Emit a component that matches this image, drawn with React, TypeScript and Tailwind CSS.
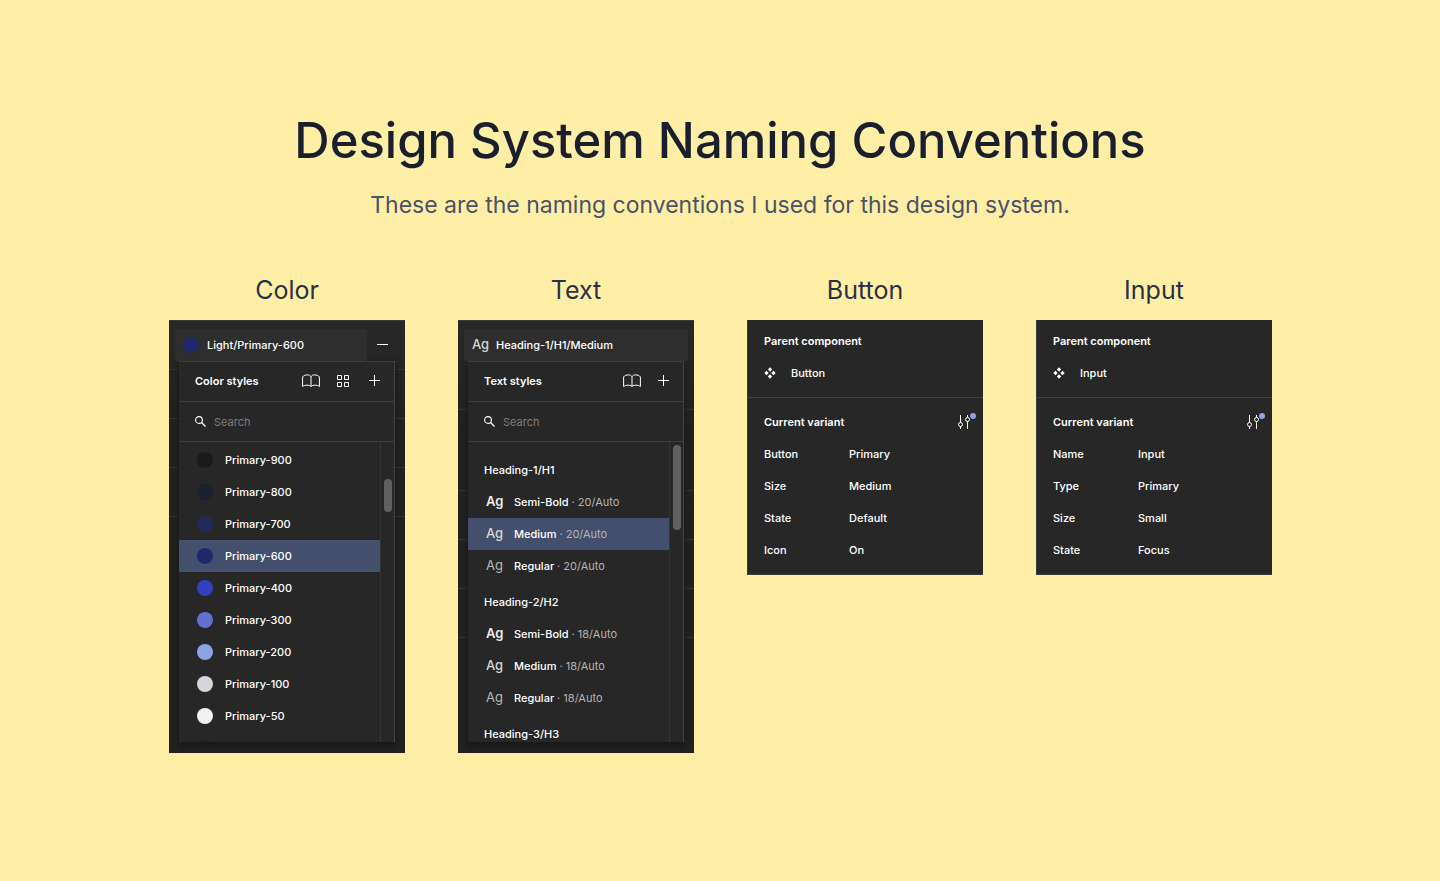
import type { ReactNode } from "react";

type Swatch = { name: string; color: string };
type TextGroup = { title: string; size?: string; styles: { name: string; weight: string }[] };

const swatches: Swatch[] = [
  { name: "Primary-900", color: "bg-[#1a1a1b]" },
  { name: "Primary-800", color: "bg-[#1a202e]" },
  { name: "Primary-700", color: "bg-[#212a58]" },
  { name: "Primary-600", color: "bg-[#20276b]" },
  { name: "Primary-400", color: "bg-[#3340bf]" },
  { name: "Primary-300", color: "bg-[#6470ce]" },
  { name: "Primary-200", color: "bg-[#8fa2e3]" },
  { name: "Primary-100", color: "bg-[#d5d6db]" },
  { name: "Primary-50", color: "bg-[#f1f2f4]" },
];

const weights = [
  { name: "Semi-Bold", weight: "font-semibold text-[#ececec]" },
  { name: "Medium", weight: "font-medium text-[#d6d6d6]" },
  { name: "Regular", weight: "font-normal text-[#b8b8b8]" },
];

const textGroups: TextGroup[] = [
  { title: "Heading-1/H1", size: "20/Auto", styles: weights },
  { title: "Heading-2/H2", size: "18/Auto", styles: weights },
  { title: "Heading-3/H3", styles: [] },
];

const BookIcon = () => (
  <svg width="18" height="14" viewBox="0 0 18 14" fill="none" stroke="currentColor">
    <path d="M9 2.700C8.300 1.400 7 .9 5.300.9S1.600 1.400.6 2.900v9.600C1.800 11.500 3.500 11.200 5 11.200s3 .3 4 1.300c1-1 2.500-1.300 4-1.300s3.200.3 4.400 1.300V2.900C16.400 1.400 14.400.9 12.700.9S9.700 1.400 9 2.700zM9 2.700v9.800" />
  </svg>
);

const GridIcon = () => (
  <svg width="12" height="12" viewBox="0 0 12 12" fill="none" stroke="currentColor">
    <path d="M.5.5h4v4h-4zM7.500.5h4v4h-4zM.5 7.500h4v4h-4zM7.500 7.500h4v4h-4z" />
  </svg>
);

const PlusIcon = () => (
  <svg width="12" height="12" viewBox="0 0 12 12" stroke="currentColor">
    <path d="M5.500 0v11M0 5.500h11" />
  </svg>
);

const MinusIcon = () => (
  <svg width="12" height="12" viewBox="0 0 12 12" stroke="currentColor">
    <path d="M0 5.500h11" />
  </svg>
);

const SearchIcon = () => (
  <svg width="11" height="11" viewBox="0 0 11 11" fill="none" stroke="currentColor">
    <circle cx="4" cy="4" r="3.400" strokeWidth="1.100" />
    <path d="M6.500 6.500l4 4" strokeWidth="1.300" />
  </svg>
);

const ComponentIcon = () => (
  <svg width="12" height="12" viewBox="0 0 12 12" fill="currentColor">
    <path d="M6 .3l2.200 2.200L6 4.700 3.800 2.500zM6 7.300l2.200 2.200L6 11.700 3.800 9.500zM2.500 3.800L4.700 6 2.500 8.200.3 6zM9.500 3.800L11.700 6 9.500 8.200 7.300 6z" />
  </svg>
);

const VariantIcon = () => (
  <svg width="20" height="18" viewBox="0 0 20 18" fill="none" stroke="currentColor">
    <path d="M3.500 2v7.500M3.500 13.500V16M10.500 2v2.500M10.500 8.500V16" />
    <circle cx="3.500" cy="11.500" r="2" />
    <circle cx="10.500" cy="6.500" r="2" />
    <circle cx="16" cy="3" r="3" fill="#8fa2e3" stroke="none" />
  </svg>
);

const IconButton = ({ label, children }: { label: string; children: ReactNode }) => (
  <button type="button" aria-label={label} className="flex h-8 w-8 items-center justify-center text-white">
    {children}
  </button>
);

const Column = ({ title, children }: { title: string; children: ReactNode }) => (
  <section className="w-[236px]">
    <h2 className="mb-3 text-center text-[25px] leading-9 text-[#2a3048]">{title}</h2>
    {children}
  </section>
);

// Dimmed property rows that show on both sides of the open picker
const Backdrop = ({ rows }: { rows: string[] }) => (
  <div className="col-start-1 row-start-1 border-t border-[#3a3a3a]">
    {rows.map((height, i) => (
      <div key={i} className={`border-b border-[#363636] ${height}`} />
    ))}
  </div>
);

type PickerProps = {
  id: string;
  title: string;
  current: ReactNode;
  tail?: ReactNode;
  actions: ReactNode;
  rows: string[];
  thumb: string;
  children: ReactNode;
};

const Picker = ({ id, title, current, tail, actions, rows, thumb, children }: PickerProps) => (
  <div className="grid grid-cols-1 overflow-hidden bg-linear-to-b from-[#282828] to-[#222222] to-25% text-[11px] leading-4 font-medium text-white">
    <Backdrop rows={rows} />
    <div className="col-start-1 row-start-1 pt-[9px] pb-[11px]">
      <div className="flex px-1.5">
        <button type="button" className="flex h-8 flex-1 items-center gap-2 rounded-xs bg-[#2e2e2e] px-2">
          {current}
        </button>
        {tail}
      </div>
      <div className="mx-2.5 border-r border-[#444444] bg-[#272727] shadow-[0_3px_6px_1px_#181818]">
        <div className="flex h-[41px] items-center border-y border-[#3d3d3d] pr-[3px] pb-0.5 pl-4">
          <h3 className="flex-1 font-semibold">{title}</h3>
          {actions}
        </div>
        <div className="flex h-10 items-center gap-2 border-b border-[#3d3d3d] px-4">
          <SearchIcon />
          <input
            id={id}
            type="search"
            aria-label={`Search ${title}`}
            placeholder="Search"
            className="min-w-0 flex-1 bg-transparent font-normal outline-none placeholder:text-[#7c7c7c]"
          />
        </div>
        <div className="flex h-[300px] overflow-hidden">
          <div className="flex-1">{children}</div>
          <div className={`w-3.5 border-l border-[#343434] pl-[3px] ${thumb}`}>
            <div className="h-full w-2 rounded-full bg-[#606060]" />
          </div>
        </div>
      </div>
    </div>
  </div>
);

const ColorPanel = () => (
  <Picker
    id="color-search"
    title="Color styles"
    rows={["h-[49px]", "h-[49px]", "h-[49px]", "h-[49px]"]}
    thumb="pt-[37px] pb-[230px]"
    current={
      <>
        <span className="h-4 w-4 rounded-full bg-[#20276b]" />
        Light/Primary-600
      </>
    }
    tail={
      <IconButton label="Remove style">
        <MinusIcon />
      </IconButton>
    }
    actions={
      <>
        <IconButton label="Libraries">
          <BookIcon />
        </IconButton>
        <IconButton label="Grid view">
          <GridIcon />
        </IconButton>
        <IconButton label="Create color style">
          <PlusIcon />
        </IconButton>
      </>
    }
  >
    <ul className="pt-0.5">
      {swatches.map(({ name, color }) => (
        <li key={name}>
          <button
            type="button"
            className={`flex h-8 w-full items-center gap-3 pl-[18px] ${name === "Primary-600" ? "bg-[#434f6d]" : ""}`}
          >
            <span className={`h-4 w-4 rounded-full ${color}`} />
            {name}
          </button>
        </li>
      ))}
      {/* top of the next swatch, cut off by the list */}
      <li className="flex h-8 items-center pl-[18px]">
        <span className="h-4 w-4 rounded-full bg-[#1a1e2c]" />
      </li>
    </ul>
  </Picker>
);

const TextPanel = () => (
  <Picker
    id="text-search"
    title="Text styles"
    rows={["h-[89px]", "h-[81px]", "h-[49px]", "h-[49px]", "h-[49px]"]}
    thumb="pt-[3px] pb-[212px]"
    current={
      <>
        <span className="w-4 pb-0.5 text-[13px] leading-4 text-[#d6d6d6]">Ag</span>
        Heading-1/H1/Medium
      </>
    }
    actions={
      <>
        <IconButton label="Libraries">
          <BookIcon />
        </IconButton>
        <IconButton label="Create text style">
          <PlusIcon />
        </IconButton>
      </>
    }
  >
    <div className="pt-2">
      {textGroups.map(({ title, size, styles }) => (
        <div key={title} className="pt-1">
          <h4 className="flex h-8 items-center pl-4">{title}</h4>
          {styles.map(({ name, weight }) => (
            <button
              key={name}
              type="button"
              className={`flex h-8 w-full items-center gap-3 pl-[18px] ${
                title === "Heading-1/H1" && name === "Medium" ? "bg-[#434f6d]" : ""
              }`}
            >
              <span className={`w-4 pb-0.5 text-[13px] leading-4 ${weight}`}>Ag</span>
              <span>
                {name} <span className="font-normal text-[#b4b4b4]">· {size}</span>
              </span>
            </button>
          ))}
        </div>
      ))}
    </div>
  </Picker>
);

const VariantPanel = ({ component, values }: { component: string; values: [string, string][] }) => (
  <div className="border-b border-l border-[#3a3b44] bg-[#272727] text-[11px] leading-4 font-medium text-white">
    <div className="border-b border-[#404040] pt-[5px] pb-2 pl-4">
      <h3 className="flex h-8 items-center font-semibold">Parent component</h3>
      <p className="flex h-8 items-center gap-[15px]">
        <ComponentIcon />
        {component}
      </p>
    </div>
    <div className="pt-2 pb-2 pl-4">
      <div className="flex h-8 items-center justify-between pr-1.5">
        <h3 className="font-semibold">Current variant</h3>
        <button type="button" aria-label={`Edit ${component} variant`}>
          <VariantIcon />
        </button>
      </div>
      <dl>
        {values.map(([key, value]) => (
          <div key={key} className="flex h-8 items-center">
            <dt className="w-[85px]">{key}</dt>
            <dd>{value}</dd>
          </div>
        ))}
      </dl>
    </div>
  </div>
);

const App = () => {
  return (
    <main className="flex min-h-screen flex-col items-center bg-[#ffeea6] px-6 pt-[109px] pb-32 font-[Inter,sans-serif]">
      <h1 className="text-center text-[49px] leading-16 font-medium text-[#1a1f2e]">
        Design System Naming Conventions
      </h1>
      <p className="mt-4 text-center text-[23px] leading-8 text-[#4a5268]">
        These are the naming conventions I used for this design system.
      </p>
      <div className="mt-[51px] flex w-full max-w-[1104px] flex-wrap items-start justify-center gap-[53px] pl-px">
        <Column title="Color">
          <ColorPanel />
        </Column>
        <Column title="Text">
          <TextPanel />
        </Column>
        <Column title="Button">
          <VariantPanel
            component="Button"
            values={[
              ["Button", "Primary"],
              ["Size", "Medium"],
              ["State", "Default"],
              ["Icon", "On"],
            ]}
          />
        </Column>
        <Column title="Input">
          <VariantPanel
            component="Input"
            values={[
              ["Name", "Input"],
              ["Type", "Primary"],
              ["Size", "Small"],
              ["State", "Focus"],
            ]}
          />
        </Column>
      </div>
    </main>
  );
};

export default App;
